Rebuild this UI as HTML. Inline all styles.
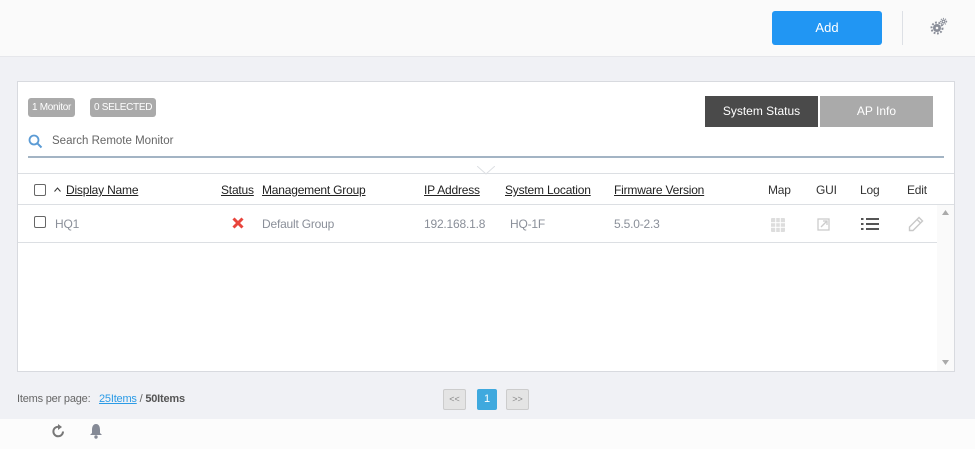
<!DOCTYPE html>
<html><head><style>
*{box-sizing:border-box;margin:0;padding:0}
body{width:975px;height:449px;background:#f0f1f5;font-family:"Liberation Sans",sans-serif;position:relative;overflow:hidden;font-size:12px;color:#333}
.top{position:absolute;left:0;top:0;width:975px;height:57px;background:#fafafa;border-bottom:1px solid #e6e7eb}
.add{position:absolute;left:772px;top:11px;width:110px;height:34px;background:#2196f3;border-radius:3px;color:#fff;font-size:13px;text-align:center;line-height:34px}
.sep{position:absolute;left:902px;top:11px;width:1px;height:34px;background:#dde0e5}
.panel{position:absolute;left:17px;top:81px;width:938px;height:291px;background:#fff;border:1px solid #d8dadf}
.badge{position:absolute;top:16px;height:19px;background:#aaa;border-radius:3px;color:#fff;font-size:10px;line-height:19px;padding:0 4px;letter-spacing:-0.3px}
.tab{position:absolute;top:14px;height:31px;line-height:31px;text-align:center;font-size:12px;color:#fff}
.search{position:absolute;left:10px;top:42px;width:916px;height:34px;border-bottom:2px solid #a3b4c4;font-size:11.5px;color:#666;line-height:34px;padding-left:24px}
.hdr{position:absolute;left:0;top:91px;width:936px;height:32px;border-top:1px solid #dcdfe3;border-bottom:1px solid #dcdfe3}
.t{position:absolute;font-size:12px;white-space:nowrap;letter-spacing:-0.2px}
.u{text-decoration:underline;color:#222}
.row{position:absolute;left:0;top:123px;width:919px;height:38px;border-bottom:1px solid #dcdfe3}
.g{color:#8a8f99}
.cb{position:absolute;width:12px;height:12px;border:1.3px solid #666;border-radius:2px}
.sb{position:absolute;left:919px;top:123px;width:17px;height:166px;background:#fafafa}
.pg{position:absolute;top:389px;width:23px;height:21px;border:1px solid #ccc;background:#e4e4e4;border-radius:2px;font-size:9px;text-align:center;line-height:19px;color:#888}
.foot{position:absolute;left:0;top:419px;width:975px;height:30px;background:#fcfcfc}
</style></head><body>
<div class="top">
<div class="add">Add</div><div class="sep"></div>
<svg style="position:absolute;left:930px;top:17px" width="18" height="18" viewBox="0 0 18 18"><circle cx="7" cy="11" r="4" fill="#8a8e99"/><circle cx="7" cy="11" r="5.5" fill="none" stroke="#8a8e99" stroke-width="2" stroke-dasharray="1.8 1.6"/><circle cx="7" cy="11" r="1.3" fill="#fafafa"/><circle cx="13.5" cy="4.5" r="2" fill="#8a8e99"/><circle cx="13.5" cy="4.5" r="3" fill="none" stroke="#8a8e99" stroke-width="1.3" stroke-dasharray="1 1.2"/><circle cx="13.5" cy="4.5" r="0.8" fill="#fafafa"/></svg>
</div>
<div class="panel">
<div class="badge" style="left:10px">1 Monitor</div>
<div class="badge" style="left:72px">0 SELECTED</div>
<div class="tab" style="left:687px;width:113px;background:#4a4a4a">System Status</div>
<div class="tab" style="left:802px;width:113px;background:#aaa">AP Info</div>
<div class="search">Search Remote Monitor
<svg style="position:absolute;left:0;top:10px" width="15" height="15" viewBox="0 0 15 15"><circle cx="6" cy="6" r="4.5" fill="none" stroke="#5b9bd5" stroke-width="1.8"/><line x1="9.3" y1="9.3" x2="13.5" y2="13.5" stroke="#5b9bd5" stroke-width="2"/></svg></div>
<svg style="position:absolute;left:459px;top:84px" width="18" height="9"><polyline points="0,0 9,8 18,0" fill="#fff" stroke="#dcdfe3"/></svg>
<div class="hdr">
<div class="cb" style="left:16px;top:10px"></div>
<svg style="position:absolute;left:36px;top:13px" width="7" height="5"><polyline points="0.5,4.5 3.5,1 6.5,4.5" fill="none" stroke="#333" stroke-width="1"/></svg>
<div class="t u" style="left:48px;top:9px">Display Name</div>
<div class="t u" style="left:203px;top:9px">Status</div>
<div class="t u" style="left:244px;top:9px">Management Group</div>
<div class="t u" style="left:406px;top:9px">IP Address</div>
<div class="t u" style="left:487px;top:9px">System Location</div>
<div class="t u" style="left:596px;top:9px">Firmware Version</div>
<div class="t" style="left:750px;top:9px">Map</div>
<div class="t" style="left:798px;top:9px">GUI</div>
<div class="t" style="left:842px;top:9px">Log</div>
<div class="t" style="left:889px;top:9px">Edit</div>
</div>
<div class="row">
<div class="cb" style="left:16px;top:11px"></div>
<div class="t g" style="left:37px;top:12px">HQ1</div>
<svg style="position:absolute;left:214px;top:12px" width="12" height="12" viewBox="0 0 12 12"><path d="M1.5 1.5L10.5 10.5M10.5 1.5L1.5 10.5" stroke="#e8453c" stroke-width="3"/></svg>
<div class="t g" style="left:244px;top:12px">Default Group</div>
<div class="t g" style="left:406px;top:12px">192.168.1.8</div>
<div class="t g" style="left:492px;top:12px">HQ-1F</div>
<div class="t g" style="left:596px;top:12px">5.5.0-2.3</div>
<svg style="position:absolute;left:753px;top:13px" width="14" height="14" viewBox="0 0 14 14" fill="#ddd"><rect x="0" y="0" width="14" height="14" rx="1"/><g stroke="#fff" stroke-width="1"><line x1="4.7" y1="0" x2="4.7" y2="14"/><line x1="9.3" y1="0" x2="9.3" y2="14"/><line x1="0" y1="4.7" x2="14" y2="4.7"/><line x1="0" y1="9.3" x2="14" y2="9.3"/></g></svg>
<svg style="position:absolute;left:799px;top:13px" width="13" height="13" viewBox="0 0 13 13" fill="none" stroke="#ccc" stroke-width="1.3"><rect x="1" y="1" width="11" height="11"/><line x1="4" y1="9" x2="10" y2="3"/><polyline points="6,3 10,3 10,7"/></svg>
<svg style="position:absolute;left:843px;top:12px" width="18" height="14" viewBox="0 0 18 14" fill="#555"><rect x="0" y="1" width="2.5" height="2"/><rect x="5" y="1" width="13" height="2"/><rect x="0" y="6" width="2.5" height="2"/><rect x="5" y="6" width="13" height="2"/><rect x="0" y="11" width="2.5" height="2"/><rect x="5" y="11" width="13" height="2"/></svg>
<svg style="position:absolute;left:889px;top:11px" width="17" height="17" viewBox="0 0 17 17" fill="none" stroke="#c8c8c8" stroke-width="1.4"><path d="M12 1.5l3.5 3.5L6 14.5H2.5V11z M10 3.5l3.5 3.5"/></svg>
</div>
<div class="sb"><svg style="position:absolute;left:5px;top:5px" width="7" height="5"><polygon points="0,5 3.5,0 7,5" fill="#aaa"/></svg><svg style="position:absolute;left:5px;top:155px" width="7" height="5"><polygon points="0,0 3.5,5 7,0" fill="#aaa"/></svg></div>
</div>
<div class="t" style="left:17px;top:393px;font-size:11px;color:#666">Items per page: &nbsp;&nbsp;<span style="color:#2b9be6;text-decoration:underline">25Items</span> / <b style="color:#555">50Items</b></div>
<div class="pg" style="left:443px">&lt;&lt;</div>
<div class="pg" style="left:477px;width:20px;background:#3fa9de;border-color:#3fa9de;color:#fff;font-size:11px">1</div>
<div class="pg" style="left:506px">&gt;&gt;</div>
<div class="foot">
<svg style="position:absolute;left:51px;top:5px" width="15" height="15" viewBox="0 0 15 15"><path d="M12 7.5A4.8 4.8 0 1 1 7.5 2.7" fill="none" stroke="#777" stroke-width="2"/><polygon points="7,0 11,3 7,6" fill="#777"/></svg>
<svg style="position:absolute;left:89px;top:4px" width="14" height="16" viewBox="0 0 14 16" fill="#858a96"><path d="M7 1c-3 0-4 3-4 6v3L1 12h12l-2-2V7c0-3-1-6-4-6z"/><circle cx="7" cy="14" r="1.7"/></svg>
</div>
</body></html>
